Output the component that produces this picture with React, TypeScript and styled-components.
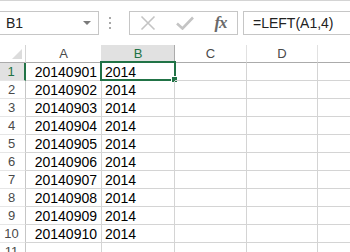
import React, { FC } from 'react';
import styled, { createGlobalStyle } from 'styled-components';

const GlobalStyle = createGlobalStyle`
  html, body {
    margin: 0;
    padding: 0;
    background: #ffffff;
    overflow: hidden;
  }
  body {
    font-family: "Liberation Sans", Arial, sans-serif;
  }
`;

const Window = styled.div`
  width: 350px;
  height: 252px;
  overflow: hidden;
  background: #ffffff;
  border-top: 1px solid #d4d4d4;
  box-sizing: border-box;
`;

const FormulaBar = styled.div`
  display: flex;
  align-items: center;
  height: 44px;
  padding-top: 10px;
  padding-bottom: 10px;
  box-sizing: border-box;
`;

const NameBox = styled.div`
  display: flex;
  align-items: center;
  justify-content: space-between;
  width: 100px;
  height: 24px;
  margin-left: -1px;
  padding: 0 7px 0 6px;
  border: 1px solid #c6c6c6;
  box-sizing: border-box;
  font-size: 14px;
  color: #222;
`;

const Caret = styled.span`
  width: 0;
  height: 0;
  border-left: 4px solid transparent;
  border-right: 4px solid transparent;
  border-top: 4px solid #7a7a7a;
`;

const Grip = styled.div`
  display: flex;
  flex-direction: column;
  gap: 3px;
  margin: 0 18px 0 10px;
`;

const Dot = styled.span`
  width: 2px;
  height: 2px;
  background: #a8a8a8;
`;

const ButtonGroup = styled.div`
  display: flex;
  align-items: center;
  width: 109px;
  height: 24px;
  border: 1px solid #c6c6c6;
  box-sizing: border-box;
`;

const IconButton = styled.div<{ $w: number }>`
  display: flex;
  align-items: center;
  justify-content: center;
  width: ${(p) => p.$w}px;
  height: 100%;
`;

const Fx = styled.span`
  font-family: "Liberation Serif", "Times New Roman", serif;
  font-style: italic;
  font-weight: bold;
  font-size: 17px;
  color: #6a6a6a;
  letter-spacing: -1px;
`;

const FormulaInput = styled.div`
  flex: 1;
  display: flex;
  align-items: center;
  height: 24px;
  margin-left: 5px;
  margin-right: -2px;
  padding-left: 9px;
  border: 1px solid #c6c6c6;
  box-sizing: border-box;
  font-size: 14px;
  color: #222;
  white-space: nowrap;
`;

const Grid = styled.div`
  display: grid;
  grid-template-columns: 26px 76px 73px 72px 71px 40px;
  grid-auto-rows: 18px;
`;

const Corner = styled.div`
  position: relative;
  border-right: 1px solid #d4d4d4;
  border-bottom: 1px solid #ababab;
  box-sizing: border-box;

  &::after {
    content: '';
    position: absolute;
    right: 3px;
    bottom: 3px;
    width: 0;
    height: 0;
    border-left: 10px solid transparent;
    border-bottom: 10px solid #dcdcdc;
  }
`;

const ColHead = styled.div<{ $active?: boolean }>`
  display: flex;
  align-items: center;
  justify-content: center;
  border-right: 1px solid ${(p) => (p.$active ? '#ababab' : '#e1e1e1')};
  border-bottom: 1px solid #ababab;
  box-sizing: border-box;
  background: ${(p) => (p.$active ? '#e1e1e1' : '#ffffff')};
  color: ${(p) => (p.$active ? '#217346' : '#4a4a4a')};
  font-size: 13px;
`;

const RowHead = styled.div<{ $active?: boolean }>`
  display: flex;
  align-items: center;
  justify-content: center;
  border-right: ${(p) => (p.$active ? '2px solid #217346' : '1px solid #c6c6c6')};
  border-bottom: 1px solid #e6e6e6;
  box-sizing: border-box;
  background: ${(p) => (p.$active ? '#e1e1e1' : '#ffffff')};
  color: ${(p) => (p.$active ? '#217346' : '#4a4a4a')};
  font-size: 13px;
  padding-right: 2px;
`;

const Cell = styled.div<{ $align?: 'left' | 'right' }>`
  position: relative;
  display: flex;
  align-items: center;
  justify-content: ${(p) => (p.$align === 'right' ? 'flex-end' : 'flex-start')};
  padding: 1px 4px 0 3px;
  border-right: 1px solid #d4d4d4;
  border-bottom: 1px solid #d4d4d4;
  box-sizing: border-box;
  font-size: 14px;
  color: #000;
  white-space: nowrap;
`;

const Selection = styled.div`
  position: absolute;
  left: -2px;
  top: -2px;
  right: -2px;
  bottom: -1px;
  border: 2px solid #217346;
  pointer-events: none;

  &::after {
    content: '';
    position: absolute;
    right: -4px;
    bottom: -4px;
    width: 5px;
    height: 5px;
    background: #217346;
    border: 1px solid #ffffff;
  }
`;

const columns = ['A', 'B', 'C', 'D', ''];
const rows = Array.from({ length: 11 }, (_, i) => i + 1);

const App: FC = () => (
  <>
    <GlobalStyle />
    <Window>
      <FormulaBar>
        <NameBox>
          <span>B1</span>
          <Caret />
        </NameBox>
        <Grip>
          <Dot />
          <Dot />
          <Dot />
        </Grip>
        <ButtonGroup>
          <IconButton $w={36}>
            <svg width="16" height="16" viewBox="0 0 16 16">
              <path d="M1.5 1.5 L14.5 14.5 M14.5 1.5 L1.5 14.5" stroke="#c4c4c4" strokeWidth="1.6" fill="none" />
            </svg>
          </IconButton>
          <IconButton $w={38}>
            <svg width="18" height="14" viewBox="0 0 18 14">
              <path d="M1 7.5 L6.5 12.5 L17 1.5" stroke="#c4c4c4" strokeWidth="2.6" fill="none" />
            </svg>
          </IconButton>
          <IconButton $w={33}>
            <Fx>fx</Fx>
          </IconButton>
        </ButtonGroup>
        <FormulaInput>=LEFT(A1,4)</FormulaInput>
      </FormulaBar>
      <Grid>
        <Corner />
        {columns.map((c, i) => (
          <ColHead key={i} $active={c === 'B'}>
            {c}
          </ColHead>
        ))}
        {rows.map((r) => (
          <React.Fragment key={r}>
            <RowHead $active={r === 1}>{r}</RowHead>
            <Cell $align="right">{r <= 10 ? `201409${String(r).padStart(2, '0')}` : ''}</Cell>
            <Cell>
              {r <= 10 ? '2014' : ''}
              {r === 1 && <Selection />}
            </Cell>
            <Cell />
            <Cell />
            <Cell />
          </React.Fragment>
        ))}
      </Grid>
    </Window>
  </>
);

export default App;
